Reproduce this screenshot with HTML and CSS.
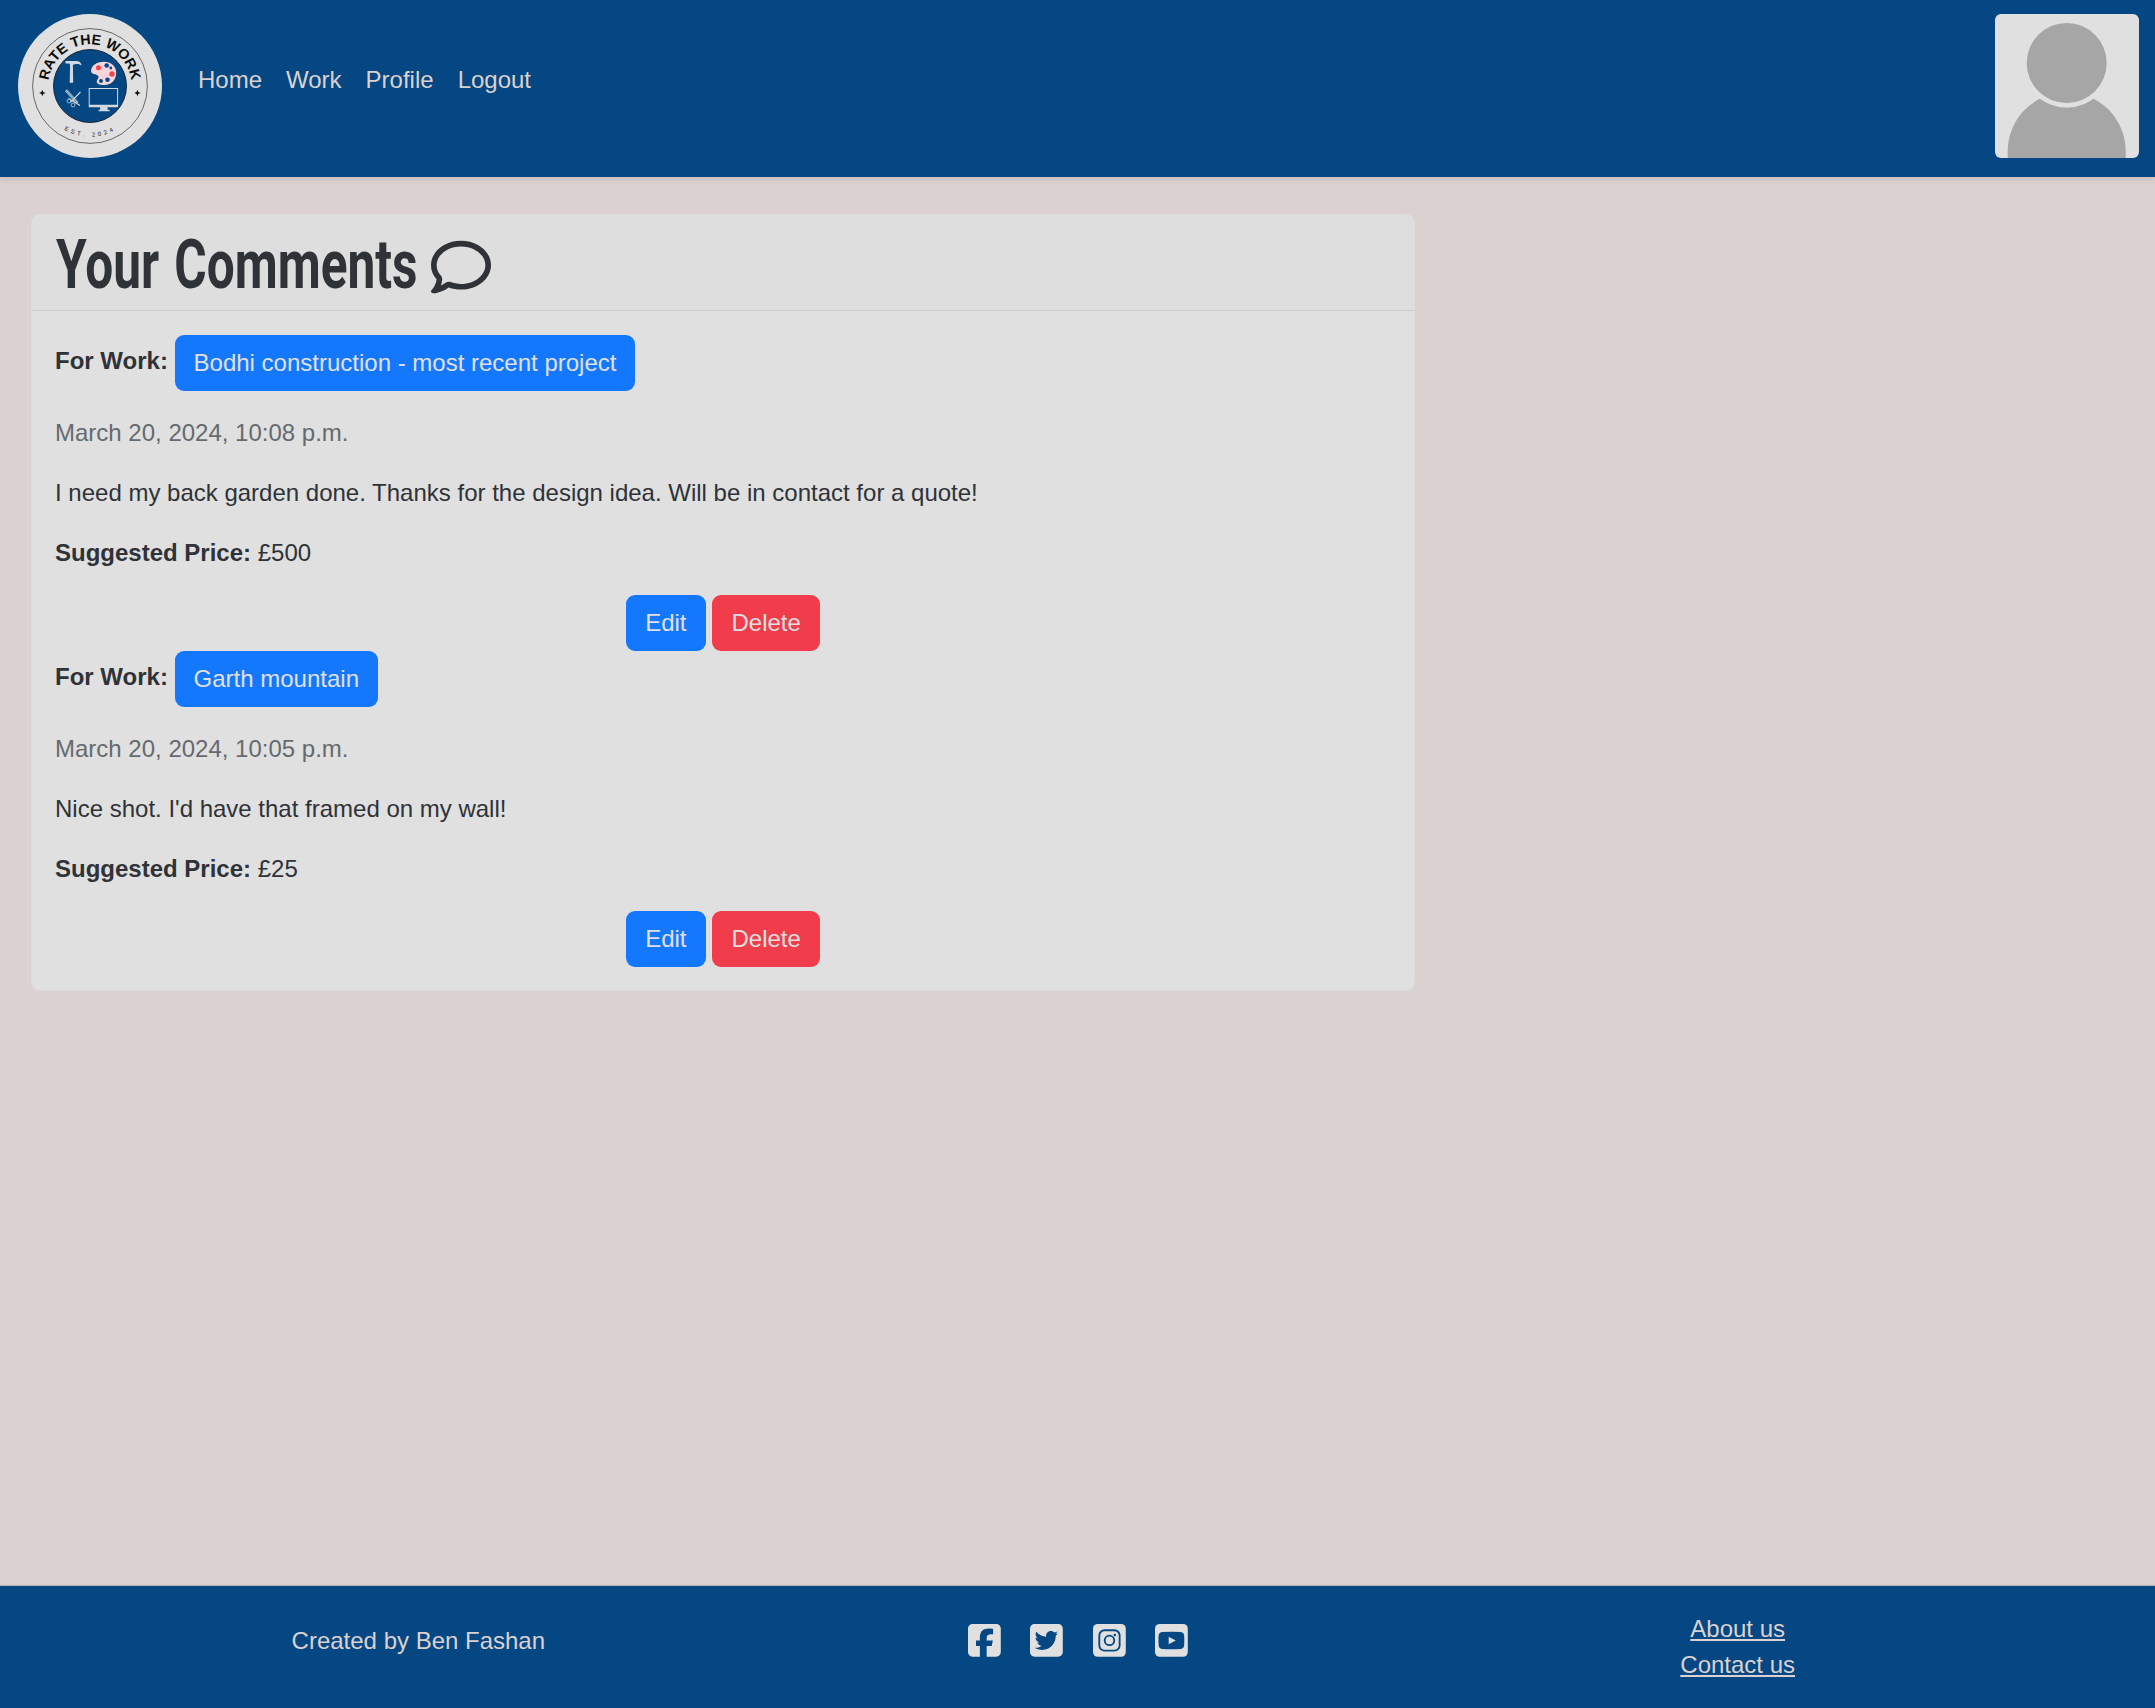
FILE: index.html
```html
<!DOCTYPE html>
<html lang="en">
<head>
<meta charset="utf-8">
<title>Rate The Work - Your Comments</title>
<link rel="stylesheet" href="styles.css">
</head>
<body>
<header class="navbar">
  <a class="brand" href="#">
    <svg class="logo" viewBox="0 0 144 144" role="img" aria-label="Rate The Work">
      <defs>
        <path id="arc-top" d="M30.500 76A41.700 41.700 0 1 1 113.500 76"/>
        <path id="arc-bottom" d="M21.200 72A50.800 50.800 0 0 0 122.800 72"/>
      </defs>
      <circle cx="72" cy="72" r="72" fill="#e0e0e0"/>
      <circle cx="72" cy="72" r="57.400" fill="none" stroke="#333" stroke-width=".7"/>
      <circle cx="72" cy="72" r="36.500" fill="#044782" stroke="#101c2c" stroke-width=".9"/>
      <text class="logo-name" text-anchor="middle"><textPath href="#arc-top" startOffset="50%">RATE THE WORK</textPath></text>
      <text class="logo-est" text-anchor="middle"><textPath href="#arc-bottom" startOffset="50%">EST. 2024</textPath></text>
      <path fill="#111" d="M24.300 75.800l.9 2.300 2.300.9-2.300.9-.9 2.300-.9-2.300-2.300-.9 2.300-.9z"/>
      <path fill="#111" d="M119.400 75.800l.9 2.300 2.300.9-2.300.9-.9 2.300-.9-2.300-2.300-.9 2.300-.9z"/>
      <path fill="#d3d9e0" d="M47.500 47h10.500c3.500 0 5.300 1.700 5.600 4.700-1.800-1.700-3.500-2-5.500-1.600l-3.200.6.300 18h-3.500l.4-18-1-1.300h-3.600z"/>
      <path fill="#f5d5d8" d="M86 47.700c7 0 12.200 4.300 12.200 11 0 7.500-5.200 12.300-12.200 12.300-4.500 0-7.500-1.200-7.200-3.800.3-2.300 2.600-3.200 1.400-5.300-1.500-2.400-7.200-.9-7.200-4.900 0-5.200 5.500-9.300 13-9.300z"/>
      <circle cx="80.500" cy="53.700" r="2.500" fill="#f3464b"/>
      <circle cx="88.700" cy="51.500" r="2.300" fill="#0b3fa0"/>
      <circle cx="92.800" cy="54" r="1.400" fill="#0b3fa0"/>
      <circle cx="94" cy="60" r="2.700" fill="#f3464b"/>
      <circle cx="89.500" cy="65.700" r="2.300" fill="#0b3fa0"/>
      <circle cx="83" cy="67" r="2" fill="#044782"/>
      <path d="M48 76.200L59.500 89" stroke="#bccad8" stroke-width="3" stroke-dasharray="1 .35"/>
      <path d="M62.500 78L52.500 88.300M50.500 84.500L62 91.500" stroke="#d3d9e0" stroke-width="1.100"/>
      <circle cx="51" cy="87" r="1.900" fill="none" stroke="#bccad8" stroke-width=".8"/>
      <circle cx="55" cy="91" r="1.900" fill="none" stroke="#bccad8" stroke-width=".8"/>
      <path fill="#d3d9e0" fill-rule="evenodd" d="M70.700 74h29.400v19.200h-10.500v2.600h2v1.500h-11v-1.500h1.500v-2.600h-11.400zM71.700 75v15.800h27.400V75z"/>
    </svg>
  </a>
  <nav class="nav">
    <a href="#">Home</a>
    <a href="#">Work</a>
    <a href="#">Profile</a>
    <a href="#">Logout</a>
  </nav>
  <svg class="avatar" viewBox="0 0 144 144" role="img" aria-label="Profile picture">
    <rect width="144" height="144" fill="#e0e0e0"/>
    <path fill="#a6a6a6" d="M12.700 144v-6.700a59 59 0 0 1 118 0v6.700z"/>
    <circle cx="71.700" cy="49" r="44.700" fill="#e0e0e0"/>
    <circle cx="71.700" cy="49" r="40" fill="#a6a6a6"/>
  </svg>
</header>

<main class="content">
  <section class="card">
    <div class="card-header">
      <h1><span class="title">Your Comments</span><svg class="bubble" viewBox="0 0 512 512" fill="currentColor"><path d="M123.600 391.300c12.900-9.400 29.600-11.800 44.600-6.400c26.500 9.600 56.200 15.100 87.800 15.100c124.700 0 208-80.500 208-160s-83.300-160-208-160S48 160.500 48 240c0 32 12.400 62.800 35.700 89.200c8.600 9.700 12.800 22.500 11.800 35.500c-1.400 18.100-5.700 34.700-11.300 49.400c17-7.900 31.100-16.700 39.400-22.700zM21.200 431.900c1.800-2.700 3.500-5.400 5.100-8.100c10-16.600 19.500-38.400 21.400-62.900C17.700 326.800 0 285.100 0 240C0 125.100 114.600 32 256 32s256 93.100 256 208s-114.600 208-256 208c-37.100 0-72.300-6.400-104.100-17.900c-11.900 8.700-31.300 20.600-54.300 30.600c-15.100 6.600-32.300 12.600-50.100 16.100c-.8 .2-1.600 .3-2.400 .5c-4.400 .8-8.700 1.500-13.200 1.900c-.2 0-.5 .1-.7 .1c-5.100 .5-10.200 .8-15.300 .8c-6.500 0-12.300-3.900-14.800-9.900c-2.500-6-1.100-12.800 3.400-17.400c4.100-4.200 7.800-8.700 11.300-13.500c1.700-2.300 3.300-4.600 4.800-6.900z"/></svg></h1>
    </div>
    <div class="card-body">
      <article>
        <p class="work"><strong>For Work:</strong> <a class="btn primary" href="#">Bodhi construction - most recent project</a></p>
        <p class="muted">March 20, 2024, 10:08 p.m.</p>
        <p>I need my back garden done. Thanks for the design idea. Will be in contact for a quote!</p>
        <p><strong>Suggested Price:</strong> £500</p>
        <div class="actions"><a class="btn primary" href="#">Edit</a><a class="btn danger" href="#">Delete</a></div>
      </article>
      <article>
        <p class="work"><strong>For Work:</strong> <a class="btn primary" href="#">Garth mountain</a></p>
        <p class="muted">March 20, 2024, 10:05 p.m.</p>
        <p>Nice shot. I'd have that framed on my wall!</p>
        <p><strong>Suggested Price:</strong> £25</p>
        <div class="actions"><a class="btn primary" href="#">Edit</a><a class="btn danger" href="#">Delete</a></div>
      </article>
    </div>
  </section>
</main>

<footer class="footer">
  <div class="footer-inner">
    <p class="credit">Created by Ben Fashan</p>
    <div class="social">
      <svg viewBox="0 32 448 448"><path d="M64 32C28.700 32 0 60.700 0 96V416c0 35.300 28.700 64 64 64h98.200V334.200H109.400V256h52.800V222.300c0-87.100 39.400-127.500 125-127.500c16.200 0 44.200 3.200 55.700 6.400V172c-6-.6-16.500-1-29.600-1c-42 0-58.200 15.900-58.200 57.200V256h83.600l-14.400 78.200H255V480H384c35.300 0 64-28.700 64-64V96c0-35.300-28.700-64-64-64H64z"/></svg>
      <svg viewBox="0 32 448 448"><path d="M64 32C28.700 32 0 60.700 0 96V416c0 35.300 28.700 64 64 64H384c35.300 0 64-28.700 64-64V96c0-35.300-28.700-64-64-64H64zM351.300 199.300v0c0 86.700-66 186.600-186.600 186.600c-37.200 0-71.700-10.800-100.700-29.400c5.300 .6 10.400 .8 15.800 .8c30.700 0 58.900-10.400 81.400-28c-28.800-.6-53-19.500-61.300-45.500c10.100 1.500 19.200 1.500 29.600-1.200c-30-6.100-52.500-32.500-52.500-64.400v-.8c8.700 4.900 18.900 7.900 29.600 8.300c-9-6-16.400-14.100-21.500-23.600s-7.800-20.200-7.700-31c0-12.200 3.200-23.400 8.900-33.100c32.300 39.800 80.800 65.800 135.200 68.600c-9.300-44.500 24-80.600 64-80.600c18.900 0 35.900 7.900 47.900 20.700c14.800-2.800 29-8.300 41.600-15.800c-4.900 15.200-15.200 28-28.800 36.100c13.200-1.400 26-5.100 37.800-10.200c-8.900 13.100-20.100 24.700-32.900 34c.2 2.800 .2 5.700 .2 8.500z"/></svg>
      <svg viewBox="0 32 448 448"><rect y="32" width="448" height="448" rx="64"/><g fill="none" stroke="#044782" stroke-width="25"><rect x="86" y="117" width="278" height="278" rx="72"/><circle cx="225" cy="256" r="65"/></g><circle cx="299" cy="182" r="17" fill="#044782"/></svg>
      <svg viewBox="0 32 448 448"><rect y="32" width="448" height="448" rx="64"/><path fill="#044782" d="M96 142Q224 134 352 142Q398 146 399 200Q402 256 399 312Q398 369 352 372Q224 380 96 372Q50 369 49 312Q46 256 49 200Q50 146 96 142z"/><path d="M187 207L284 257L187 308z"/></svg>
    </div>
    <div class="links">
      <a href="#">About us</a>
      <a href="#">Contact us</a>
    </div>
  </div>
</footer>
</body>
</html>
```
FILE: styles.css
```css
* {
  box-sizing: border-box;
}

body {
  margin: 0;
  min-height: 100vh;
  display: flex;
  flex-direction: column;
  background: #dbd1d0;
  color: #2f3237;
  font: 24px/36px "Liberation Sans", Arial, sans-serif;
}

p {
  margin: 0 0 24px;
}

.navbar {
  display: flex;
  align-items: flex-start;
  height: 177px;
  padding: 14px 16px 0 18px;
  background: #044782;
  box-shadow: 0 3px 6px rgba(0, 0, 0, .09);
}

.brand,
.logo,
.avatar {
  display: block;
  width: 144px;
  height: 144px;
}

.logo-name {
  font: bold 14.2px "Liberation Sans", Arial, sans-serif;
  letter-spacing: .1px;
  fill: #0c0c0c;
}

.logo-est {
  font-size: 6px;
  letter-spacing: 3px;
  fill: #222;
}

.nav {
  display: flex;
  gap: 24px;
  margin: 48px auto 0 36px;
}

.nav a,
.links a {
  color: #dbd1d0;
}

.nav a {
  text-decoration: none;
}

.avatar {
  border-radius: 6px;
}

.content {
  flex: 1;
  padding: 37px 31px;
}

.card {
  width: 1384px;
  border: 1px solid #dcdcdc;
  border-radius: 9px;
  background: #e0e0e0;
  overflow: hidden;
}

.card-header {
  height: 96px;
  padding: 11px 24px 0;
  border-bottom: 1px solid #cecece;
  background: #dedede;
}

h1 {
  display: flex;
  align-items: flex-start;
  margin: 0;
  font: bold 69px/72px Roboto, sans-serif;
}

.title {
  width: 375px;
  margin-top: 3px;
  white-space: nowrap;
  word-spacing: 4px;
  transform: scaleX(.719);
  transform-origin: 0 0;
}

.bubble {
  width: 60px;
  height: 60px;
  margin-top: 11px;
}

.card-body {
  padding: 24px 23px 23px;
}

.btn {
  display: inline-block;
  height: 56px;
  padding: 10px 19px;
  border-radius: 9px;
  color: #e0e0e0;
  text-decoration: none;
  vertical-align: middle;
}

.work {
  height: 56px;
}

.primary {
  background: #1478ff;
}

.danger {
  background: #f03c4b;
}

.muted {
  color: #656a6f;
}

.actions {
  display: flex;
  justify-content: center;
  gap: 6px;
}

.actions .btn {
  padding: 10px 19.500px;
}

.footer {
  height: 122px;
  background: #044782;
  box-shadow: 0 -1px 1px rgba(0, 0, 0, .15);
  color: #dbd1d0;
}

.footer-inner {
  display: grid;
  grid-template-columns: repeat(3, 1fr);
  width: 1980px;
  margin: 0 auto;
  padding: 25px 0 0 1px;
}

.credit {
  margin-top: 12px;
  text-align: center;
}

.social {
  display: flex;
  justify-content: center;
  gap: 29.500px;
  padding-top: 13px;
}

.social svg {
  width: 32.800px;
  height: 32.800px;
  fill: #e0e0e0;
}

.links {
  display: flex;
  flex-direction: column;
  align-items: center;
}
```
